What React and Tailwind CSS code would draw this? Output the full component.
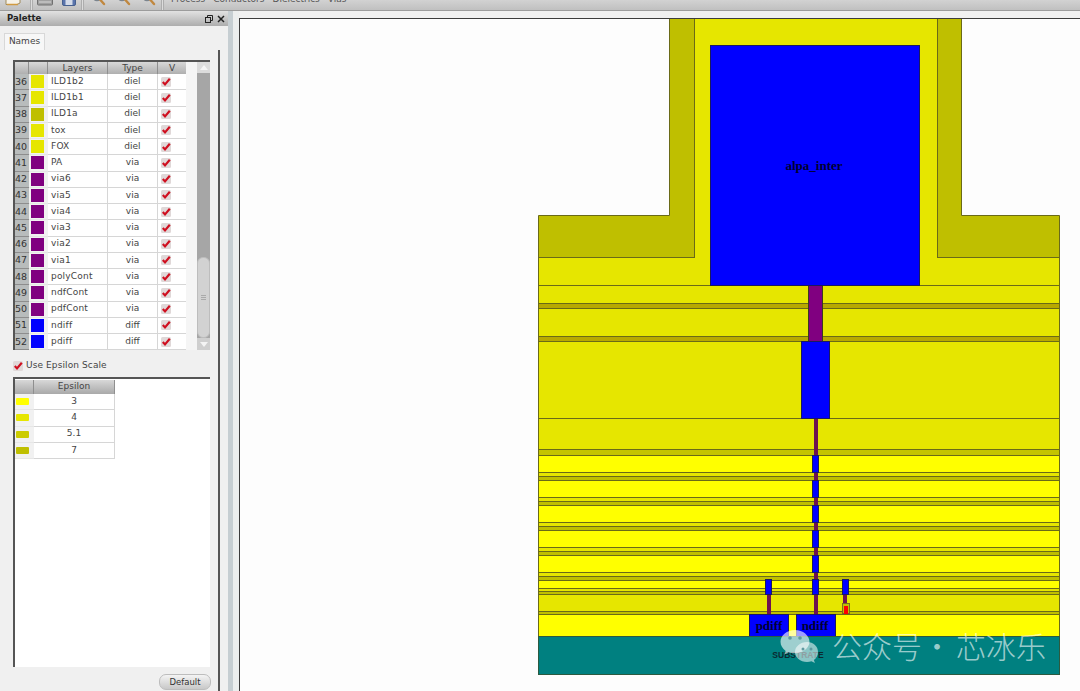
import React from "react";

const font = { fontFamily: '"DejaVu Sans", sans-serif' };

const PURPLE = "#800080";
const rows = [
  [36, "ILD1b2", "diel", "#e6e600"],
  [37, "ILD1b1", "diel", "#e6e600"],
  [38, "ILD1a", "diel", "#bfbf00"],
  [39, "tox", "diel", "#e6e600"],
  [40, "FOX", "diel", "#e6e600"],
  [41, "PA", "via", PURPLE],
  [42, "via6", "via", PURPLE],
  [43, "via5", "via", PURPLE],
  [44, "via4", "via", PURPLE],
  [45, "via3", "via", PURPLE],
  [46, "via2", "via", PURPLE],
  [47, "via1", "via", PURPLE],
  [48, "polyCont", "via", PURPLE],
  [49, "ndfCont", "via", PURPLE],
  [50, "pdfCont", "via", PURPLE],
  [51, "ndiff", "diff", "#0000ff"],
  [52, "pdiff", "diff", "#0000ff"],
  [53, "", "", "#ffff00"],
];

const eps = [
  ["3", "#ffff00"],
  ["4", "#e6e600"],
  ["5.1", "#cccc00"],
  ["7", "#bfbf00"],
];

function Check() {
  return (
    <svg width="10" height="10" viewBox="0 0 10 10" className="block">
      <rect x="0" y="0" width="10" height="10" rx="1.5" fill="#e0d8d8" />
      <path d="M1.800 5 L4 7.400 L8.800 1.800" fill="none" stroke="#cf1020" strokeWidth="2.200" />
    </svg>
  );
}

function ToolIcon({ kind }) {
  if (kind === "doc")
    return (
      <svg width="18" height="11" viewBox="0 0 18 11">
        <path d="M2 -6h14v9l-3 1.500H2z" fill="#f6f2e8" stroke="#a08a5a" />
        <path d="M3 4.500h11" stroke="#d09a40" strokeWidth="1.500" />
      </svg>
    );
  if (kind === "print")
    return (
      <svg width="17" height="11" viewBox="0 0 17 11">
        <rect x="0.5" y="-7" width="15" height="12" rx="1" fill="#a0a0a0" stroke="#707070" />
        <path d="M2 -1h12M2 2h12" stroke="#d8d8d8" />
      </svg>
    );
  if (kind === "save")
    return (
      <svg width="15" height="11" viewBox="0 0 15 11">
        <rect x="0.5" y="-7" width="13" height="12.500" rx="1.500" fill="#5a74ac" stroke="#46608f" />
        <rect x="3.500" y="0" width="7" height="5" fill="#d4dbe8" />
      </svg>
    );
  return (
    <svg width="15" height="11" viewBox="0 0 15 11">
      <circle cx="5" cy="-4" r="4.500" fill="#d0d6dc" stroke="#7c858e" strokeWidth="1.400" />
      <path d="M8 -0.500 L12 4" stroke="#c08840" strokeWidth="2.400" strokeLinecap="round" />
    </svg>
  );
}

function Grip() {
  return <div className="w-[3px] h-[10px] border-x border-[#adadad] bg-[#dcdcdc]" />;
}

function Toolbar() {
  return (
    <div className="h-[11px] shrink-0 flex items-start overflow-hidden bg-gradient-to-b from-[#d2d2d2] to-[#c0c0c0] border-b border-[#9c9c9c]">
      <div className="w-[4px]" />
      <ToolIcon kind="doc" />
      <div className="w-[8px]" />
      <Grip />
      <div className="w-[4px]" />
      <ToolIcon kind="print" />
      <div className="w-[8px]" />
      <ToolIcon kind="save" />
      <div className="w-[4px]" />
      <Grip />
      <div className="w-[8px]" />
      <ToolIcon kind="zoom" />
      <div className="w-[10px]" />
      <ToolIcon kind="zoom" />
      <div className="w-[10px]" />
      <ToolIcon kind="zoom" />
      <div className="w-[4px]" />
      <Grip />
      <div className="flex gap-[8px] ml-[7px] -mt-[8px] text-[9px] leading-[14px] text-[#555]">
        <span>Process</span>
        <span>Conductors</span>
        <span>Dielectrics</span>
        <span>Vias</span>
      </div>
    </div>
  );
}

function LayerRow({ n, name, type, color }) {
  return (
    <div className="grid grid-cols-[14px_19px_60px_50px_29px] h-[16.25px] shrink-0 text-[9px] text-[#444]">
      <div className="bg-[#b8bcbc] border-b border-[#8d8d8d] flex items-center text-[9.5px] text-[#333]">{n}</div>
      <div className="bg-[#f1f1f1] border-b border-[#e6e6e6] flex items-center pl-[2px]">
        <div className="w-[13px] h-[13px]" style={{ backgroundColor: color }} />
      </div>
      <div className="bg-white border-b border-r border-[#d6d6d6] flex items-center pl-[3px] tracking-[0.2px]">{name}</div>
      <div className="bg-white border-b border-r border-[#d6d6d6] flex items-center justify-center">{type}</div>
      <div className="bg-white border-b border-r border-[#d6d6d6] flex items-center pl-[3px]">
        {name && <Check />}
      </div>
    </div>
  );
}

function Scrollbar() {
  return (
    <div className="w-[13px] ml-[11px] flex flex-col bg-[#a6a6a6]">
      <div className="h-[11px] shrink-0 bg-[#dcdcdc] flex items-center justify-center">
        <div className="w-0 h-0 border-x-[4px] border-x-transparent border-b-[5px] border-b-[#f4f4f4]" />
      </div>
      <div className="flex-1 flex flex-col justify-end">
        <div className="h-[81px] rounded-[6px] bg-[#d2d2d2] border border-[#bdbdbd] flex flex-col items-center justify-center gap-px">
          <div className="w-[5px] h-px bg-[#aaa]" />
          <div className="w-[5px] h-px bg-[#aaa]" />
          <div className="w-[5px] h-px bg-[#aaa]" />
        </div>
      </div>
      <div className="h-[12px] shrink-0 bg-[#cfcfcf] flex items-center justify-center">
        <div className="w-0 h-0 border-x-[4px] border-x-transparent border-t-[5px] border-t-[#f4f4f4]" />
      </div>
    </div>
  );
}

function HeaderCell({ children, className = "" }) {
  return (
    <div className={"h-full flex items-center justify-center bg-gradient-to-b from-[#d8d8d8] to-[#a9a9a9] border-r border-[#8f8f8f] text-[9px] text-[#444] " + className}>
      {children}
    </div>
  );
}

function Palette() {
  return (
    <div className="w-[228px] shrink-0 flex flex-col bg-[#f0f0f0] relative" style={font}>
      <div className="h-[15px] shrink-0 flex items-center pl-[7px] bg-gradient-to-b from-[#e2e2e2] to-[#adadad]">
        <span className="text-[8.5px] font-bold text-[#222]">Palette</span>
        <svg width="8" height="8" viewBox="0 0 8 8" className="ml-auto">
          <rect x="0.5" y="2.500" width="5" height="5" fill="none" stroke="#222" />
          <path d="M2.500 2.500v-2h5v5h-2" fill="none" stroke="#222" />
        </svg>
        <svg width="8" height="8" viewBox="0 0 8 8" className="ml-[4px] mr-[3px]">
          <path d="M1 1l6 6M7 1l-6 6" stroke="#222" strokeWidth="1.500" />
        </svg>
      </div>
      <div className="h-[24px] shrink-0 flex items-end pl-[4px]">
        <div className="w-[41px] h-[17px] bg-[#f7f7f7] border border-b-0 border-[#d8d8d8] text-[9px] text-[#444] flex items-center justify-center">
          Names
        </div>
      </div>
      <div className="flex-1 min-h-0 ml-[4px] w-[216px] border-r-2 border-[#555] pl-[9px] pt-[10px] flex flex-col">
        <div className="w-[197px] h-[290px] shrink-0 border-t-2 border-l-2 border-[#555] flex bg-[#f5f5f5] overflow-hidden">
          <div className="w-[172px] flex flex-col overflow-hidden">
            <div className="grid grid-cols-[14px_19px_60px_50px_29px] h-[12px] shrink-0">
              <HeaderCell />
              <HeaderCell />
              <HeaderCell>Layers</HeaderCell>
              <HeaderCell>Type</HeaderCell>
              <HeaderCell>V</HeaderCell>
            </div>
            {rows.map((r) => (
              <LayerRow key={r[0]} n={r[2] ? r[0] : ""} name={r[1]} type={r[2]} color={r[3]} />
            ))}
          </div>
          <Scrollbar />
        </div>
        <div className="h-[27px] shrink-0 flex items-center gap-[3px] pt-[4px] text-[9px] text-[#444]">
          <Check />
          <span className="tracking-[0.1px]">Use Epsilon Scale</span>
        </div>
        <div className="w-[197px] h-[290px] shrink-0 border-t-2 border-l-2 border-[#555] bg-white flex flex-col">
          <div className="grid grid-cols-[19px_81px] h-[14px] shrink-0 mt-px w-fit">
            <HeaderCell />
            <HeaderCell>Epsilon</HeaderCell>
          </div>
          {eps.map(([v, c]) => (
            <div key={v} className="grid grid-cols-[19px_81px] h-[16.25px] shrink-0 w-fit text-[9px] text-[#444]">
              <div className="bg-[#f1f1f1] border-b border-[#e6e6e6] flex items-center pl-px">
                <div className="w-[13px] h-[7px] rounded-[1px]" style={{ backgroundColor: c }} />
              </div>
              <div className="border-b border-r border-[#d6d6d6] flex items-center justify-center">{v}</div>
            </div>
          ))}
        </div>
        <div className="flex justify-end mt-[7px] w-[198px]">
          <div className="w-[52px] h-[16px] rounded-[7px] bg-gradient-to-b from-[#f4f4f4] to-[#c8c8c8] border border-[#bdbdbd] text-[8.5px] text-[#333] flex items-center justify-center">
            Default
          </div>
        </div>
      </div>
    </div>
  );
}

const EDGE = "#6a6a18";
const Y1 = "#e6e600";
const Y2 = "#ffff00";
const OL = "#bfbf00";
const BAND = "#b8a900";
const BLUE = "#0000ff";

function R({ x, y, x2, y2, fill, stroke = EDGE, sw = 1 }) {
  return <rect x={x + 0.5} y={y + 0.5} width={x2 - x - 1} height={y2 - y} fill={fill} stroke={stroke} strokeWidth={sw} />;
}

const L = 538;
const RT = 1060;

const layers = [
  [257, 285, Y1],
  [285, 303, Y1],
  [303, 308, BAND],
  [308, 336, Y1],
  [336, 341, BAND],
  [341, 418, Y1],
  [418, 449, Y1],
  [449, 455, "#c4c400"],
  [455, 472, Y2],
  [472, 476, Y1],
  [476, 480, OL],
  [480, 497, Y2],
  [497, 501, Y1],
  [501, 505, OL],
  [505, 522, Y2],
  [522, 526, Y1],
  [526, 530, OL],
  [530, 547, Y2],
  [547, 551, Y1],
  [551, 555, OL],
  [555, 572, Y2],
  [572, 576, Y1],
  [576, 580, OL],
  [580, 588, Y2],
  [588, 591, Y1],
  [591, 594, OL],
  [594, 611, Y1],
  [611, 614, OL],
  [614, 636, Y2],
];

const metals = [
  [812, 455, 819, 472],
  [812, 480, 819, 497],
  [812, 505, 819, 522],
  [812, 530, 819, 547],
  [812, 555, 819, 572],
  [812, 579, 819, 594],
  [765, 579, 772, 594],
  [842, 579, 849, 594],
];

const VIA = "#6e1250";
const METAL_EDGE = "#1a1a60";

function Cross() {
  return (
    <svg width="840" height="672" viewBox="240 19 840 672" className="block">
      <path d="M538.500 215.500H669.500V18H694.500V257.500H538.500Z" fill={OL} stroke={EDGE} />
      <path d="M1059.500 215.500H961.500V18H937.500V257.500H1059.500Z" fill={OL} stroke={EDGE} />
      {layers.map(([a, b, c]) => (
        <R key={a} x={L} y={a} x2={RT} y2={b} fill={c} />
      ))}
      <rect x="695" y="18" width="242" height="267" fill={Y1} />
      <R x={808} y={285} x2={823} y2={341} fill={PURPLE} stroke="#3c3c1c" />
      <rect x="814" y="418" width="4" height="196" fill={VIA} />
      <rect x="767" y="594" width="4" height="20" fill={VIA} />
      <rect x="843" y="594" width="4" height="11" fill={VIA} />
      <R x={842} y={603} x2={850} y2={613} fill={OL} stroke="#7a6a20" />
      <rect x="844" y="606" width="4" height="8" fill="#ff0000" />
      <R x={710} y={45} x2={920} y2={285} fill={BLUE} stroke={METAL_EDGE} />
      <R x={801} y={341} x2={830} y2={418} fill={BLUE} stroke={METAL_EDGE} />
      {metals.map(([x, y, x2, y2]) => (
        <R key={x + "-" + y} x={x} y={y} x2={x2} y2={y2} fill={BLUE} stroke={METAL_EDGE} />
      ))}
      <R x={749} y={614} x2={789} y2={636} fill={BLUE} stroke={METAL_EDGE} />
      <R x={796} y={614} x2={836} y2={636} fill={BLUE} stroke={METAL_EDGE} />
      <R x={L} y={636} x2={RT} y2={674} fill="#008080" stroke="#2c5a40" />
      <g fontFamily='"Liberation Serif", serif' fill="#000030" fontWeight="700">
        <text x="814" y="170" fontSize="13" textAnchor="middle">alpa_inter</text>
        <text x="769" y="630" fontSize="13" textAnchor="middle">pdiff</text>
        <text x="815" y="630" fontSize="13" textAnchor="middle">ndiff</text>
      </g>
      <text x="798" y="658" fontSize="8.500" fontWeight="700" textAnchor="middle" fill="#0b2a30" fontFamily='"Liberation Sans", sans-serif'>SUBSTRATE</text>
      <g>
        <path d="M795 630c-8 0-14.500 5.300-14.500 11.800 0 3.700 2 6.900 5.200 9.100l-1.300 3.600 4.200-2.200c2 .6 4.200.9 6.400.9 8 0 14.500-5.300 14.500-11.400S803 630 795 630z" fill="#ffffff" fillOpacity="0.62" />
        <path d="M807 642c-6.600 0-12 4.500-12 10s5.400 10 12 10c1.600 0 3.100-.3 4.500-.8l3.400 1.800-1-3c2.500-1.800 4.100-4.700 4.100-8 0-5.500-4.400-10-11-10z" fill="#ffffff" fillOpacity="0.55" />
        <circle cx="790" cy="638" r="1.800" fill="#5f9aa0" />
        <circle cx="800" cy="638" r="1.800" fill="#5f9aa0" />
        <circle cx="803" cy="649" r="1.500" fill="#5f9aa0" />
        <circle cx="811" cy="649" r="1.500" fill="#5f9aa0" />
      </g>
      <g fontSize="30" fill="#ffffff" fillOpacity="0.62" fontWeight="300" fontFamily='"Noto Sans CJK SC", sans-serif'>
        <text x="832" y="658">公众号</text>
        <text x="937" y="658" textAnchor="middle">·</text>
        <text x="956" y="658">芯冰乐</text>
      </g>
    </svg>
  );
}

export default function App() {
  return (
    <div className="w-[1080px] h-[691px] overflow-hidden flex flex-col bg-[#f0f0f0]" style={font}>
      <Toolbar />
      <div className="flex-1 min-h-0 flex">
        <Palette />
        <div className="w-[11px] shrink-0 flex">
          <div className="w-[5px] bg-[#c6ced2]" />
          <div className="flex-1 bg-[#eceeee]" />
        </div>
        <div className="flex-1 min-w-0 pt-[7px] bg-[#f0f0f0]">
          <div className="h-full border-t border-l border-[#3c3c3c] bg-[#fdfdfd] overflow-hidden">
            <Cross />
          </div>
        </div>
      </div>
    </div>
  );
}
